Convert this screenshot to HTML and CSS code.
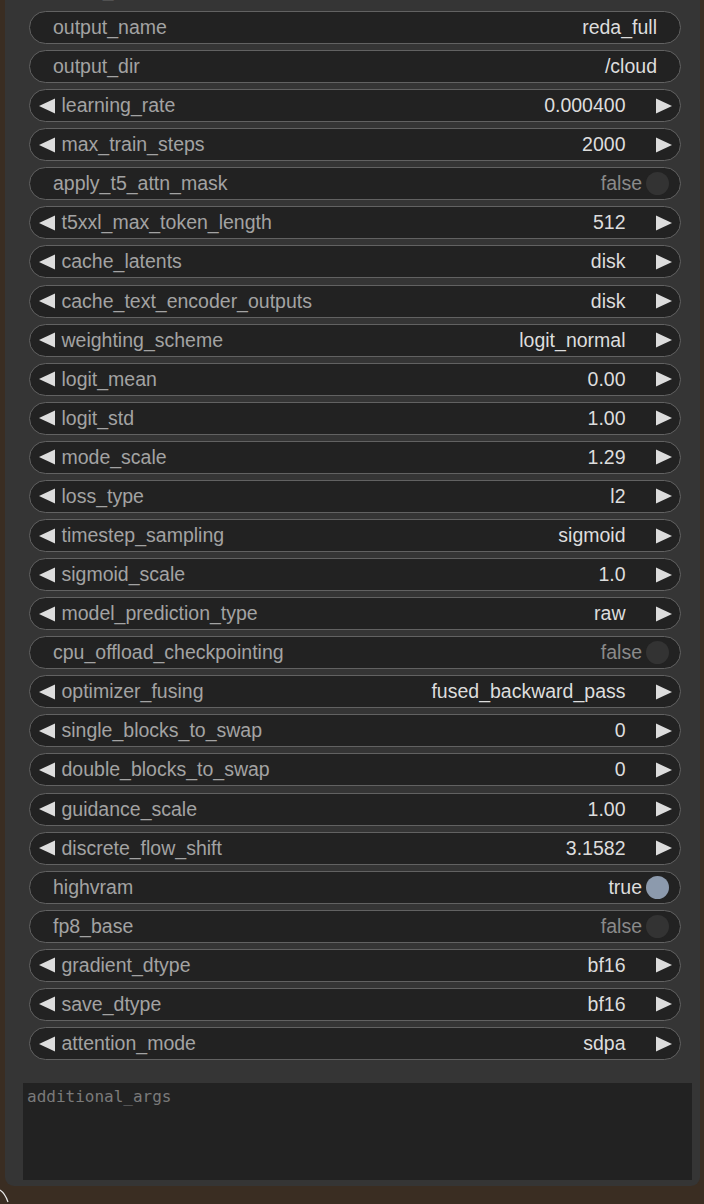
FILE: index.html
```html
<!DOCTYPE html>
<html>
<head>
<meta charset="utf-8">
<link rel="stylesheet" href="styles.css">
</head>
<body>
<div class="canvas">
  <div class="node">
    <div class="top-label">sample_prompts</div>
    <div class="widgets">
      <div class="w plain"><span class="lbl">output_name</span><span class="val">reda_full</span></div>
      <div class="w plain"><span class="lbl">output_dir</span><span class="val">/cloud</span></div>
      <div class="w num"><svg class="arr" viewBox="0 0 16 16"><polygon points="16,0.5 16,15.5 0,8"/></svg><span class="lbl">learning_rate</span><span class="val">0.000400</span><svg class="arr" viewBox="0 0 16 16"><polygon points="0,0.5 0,15.5 16,8"/></svg></div>
      <div class="w num"><svg class="arr" viewBox="0 0 16 16"><polygon points="16,0.5 16,15.5 0,8"/></svg><span class="lbl">max_train_steps</span><span class="val">2000</span><svg class="arr" viewBox="0 0 16 16"><polygon points="0,0.5 0,15.5 16,8"/></svg></div>
      <div class="w tog"><span class="lbl">apply_t5_attn_mask</span><span class="val off">false</span><span class="dot"></span></div>
      <div class="w num"><svg class="arr" viewBox="0 0 16 16"><polygon points="16,0.5 16,15.5 0,8"/></svg><span class="lbl">t5xxl_max_token_length</span><span class="val">512</span><svg class="arr" viewBox="0 0 16 16"><polygon points="0,0.5 0,15.5 16,8"/></svg></div>
      <div class="w num"><svg class="arr" viewBox="0 0 16 16"><polygon points="16,0.5 16,15.5 0,8"/></svg><span class="lbl">cache_latents</span><span class="val">disk</span><svg class="arr" viewBox="0 0 16 16"><polygon points="0,0.5 0,15.5 16,8"/></svg></div>
      <div class="w num"><svg class="arr" viewBox="0 0 16 16"><polygon points="16,0.5 16,15.5 0,8"/></svg><span class="lbl">cache_text_encoder_outputs</span><span class="val">disk</span><svg class="arr" viewBox="0 0 16 16"><polygon points="0,0.5 0,15.5 16,8"/></svg></div>
      <div class="w num"><svg class="arr" viewBox="0 0 16 16"><polygon points="16,0.5 16,15.5 0,8"/></svg><span class="lbl">weighting_scheme</span><span class="val">logit_normal</span><svg class="arr" viewBox="0 0 16 16"><polygon points="0,0.5 0,15.5 16,8"/></svg></div>
      <div class="w num"><svg class="arr" viewBox="0 0 16 16"><polygon points="16,0.5 16,15.5 0,8"/></svg><span class="lbl">logit_mean</span><span class="val">0.00</span><svg class="arr" viewBox="0 0 16 16"><polygon points="0,0.5 0,15.5 16,8"/></svg></div>
      <div class="w num"><svg class="arr" viewBox="0 0 16 16"><polygon points="16,0.5 16,15.5 0,8"/></svg><span class="lbl">logit_std</span><span class="val">1.00</span><svg class="arr" viewBox="0 0 16 16"><polygon points="0,0.5 0,15.5 16,8"/></svg></div>
      <div class="w num"><svg class="arr" viewBox="0 0 16 16"><polygon points="16,0.5 16,15.5 0,8"/></svg><span class="lbl">mode_scale</span><span class="val">1.29</span><svg class="arr" viewBox="0 0 16 16"><polygon points="0,0.5 0,15.5 16,8"/></svg></div>
      <div class="w num"><svg class="arr" viewBox="0 0 16 16"><polygon points="16,0.5 16,15.5 0,8"/></svg><span class="lbl">loss_type</span><span class="val">l2</span><svg class="arr" viewBox="0 0 16 16"><polygon points="0,0.5 0,15.5 16,8"/></svg></div>
      <div class="w num"><svg class="arr" viewBox="0 0 16 16"><polygon points="16,0.5 16,15.5 0,8"/></svg><span class="lbl">timestep_sampling</span><span class="val">sigmoid</span><svg class="arr" viewBox="0 0 16 16"><polygon points="0,0.5 0,15.5 16,8"/></svg></div>
      <div class="w num"><svg class="arr" viewBox="0 0 16 16"><polygon points="16,0.5 16,15.5 0,8"/></svg><span class="lbl">sigmoid_scale</span><span class="val">1.0</span><svg class="arr" viewBox="0 0 16 16"><polygon points="0,0.5 0,15.5 16,8"/></svg></div>
      <div class="w num"><svg class="arr" viewBox="0 0 16 16"><polygon points="16,0.5 16,15.5 0,8"/></svg><span class="lbl">model_prediction_type</span><span class="val">raw</span><svg class="arr" viewBox="0 0 16 16"><polygon points="0,0.5 0,15.5 16,8"/></svg></div>
      <div class="w tog"><span class="lbl">cpu_offload_checkpointing</span><span class="val off">false</span><span class="dot"></span></div>
      <div class="w num"><svg class="arr" viewBox="0 0 16 16"><polygon points="16,0.5 16,15.5 0,8"/></svg><span class="lbl">optimizer_fusing</span><span class="val">fused_backward_pass</span><svg class="arr" viewBox="0 0 16 16"><polygon points="0,0.5 0,15.5 16,8"/></svg></div>
      <div class="w num"><svg class="arr" viewBox="0 0 16 16"><polygon points="16,0.5 16,15.5 0,8"/></svg><span class="lbl">single_blocks_to_swap</span><span class="val">0</span><svg class="arr" viewBox="0 0 16 16"><polygon points="0,0.5 0,15.5 16,8"/></svg></div>
      <div class="w num"><svg class="arr" viewBox="0 0 16 16"><polygon points="16,0.5 16,15.5 0,8"/></svg><span class="lbl">double_blocks_to_swap</span><span class="val">0</span><svg class="arr" viewBox="0 0 16 16"><polygon points="0,0.5 0,15.5 16,8"/></svg></div>
      <div class="w num"><svg class="arr" viewBox="0 0 16 16"><polygon points="16,0.5 16,15.5 0,8"/></svg><span class="lbl">guidance_scale</span><span class="val">1.00</span><svg class="arr" viewBox="0 0 16 16"><polygon points="0,0.5 0,15.5 16,8"/></svg></div>
      <div class="w num"><svg class="arr" viewBox="0 0 16 16"><polygon points="16,0.5 16,15.5 0,8"/></svg><span class="lbl">discrete_flow_shift</span><span class="val">3.1582</span><svg class="arr" viewBox="0 0 16 16"><polygon points="0,0.5 0,15.5 16,8"/></svg></div>
      <div class="w tog"><span class="lbl">highvram</span><span class="val">true</span><span class="dot on"></span></div>
      <div class="w tog"><span class="lbl">fp8_base</span><span class="val off">false</span><span class="dot"></span></div>
      <div class="w num"><svg class="arr" viewBox="0 0 16 16"><polygon points="16,0.5 16,15.5 0,8"/></svg><span class="lbl">gradient_dtype</span><span class="val">bf16</span><svg class="arr" viewBox="0 0 16 16"><polygon points="0,0.5 0,15.5 16,8"/></svg></div>
      <div class="w num"><svg class="arr" viewBox="0 0 16 16"><polygon points="16,0.5 16,15.5 0,8"/></svg><span class="lbl">save_dtype</span><span class="val">bf16</span><svg class="arr" viewBox="0 0 16 16"><polygon points="0,0.5 0,15.5 16,8"/></svg></div>
      <div class="w num"><svg class="arr" viewBox="0 0 16 16"><polygon points="16,0.5 16,15.5 0,8"/></svg><span class="lbl">attention_mode</span><span class="val">sdpa</span><svg class="arr" viewBox="0 0 16 16"><polygon points="0,0.5 0,15.5 16,8"/></svg></div>
    </div>
    <div class="textarea">additional_args</div>
  </div>
  <svg class="wire" viewBox="0 0 20 20" width="20" height="20"><path d="M0 4 C3 6 6 10 8 16" fill="none" stroke="#e8e8e8" stroke-width="1.2"/></svg>
</div>
</body>
</html>
```
FILE: styles.css
```css
html, body {
  margin: 0;
  padding: 0;
  background: #3a2d22;
  overflow: hidden;
}
.canvas {
  position: relative;
  width: 704px;
  height: 1204px;
  overflow: hidden;
}
.node {
  margin-left: 5px;
  width: 695px;
  height: 1197px;
  background: #353535;
  border-radius: 0 0 9px 9px;
  box-sizing: border-box;
  font-family: "Liberation Sans", Arial, sans-serif;
  font-size: 19.5px;
  position: relative;
}
.top-label {
  color: #9a9a9a;
  height: 11px;
  line-height: 0;
  padding-left: 35px;
  margin-top: -11px;
  padding-top: 0;
  box-sizing: content-box;
  overflow: visible;
}
.widgets {
  display: flex;
  flex-direction: column;
  gap: 6.08px;
  padding: 11px 19px 0 24px;
}
.w {
  height: 33px;
  box-sizing: border-box;
  border: 1.5px solid #626262;
  border-radius: 17px;
  background: #222222;
  display: flex;
  align-items: center;
  white-space: nowrap;
}
.lbl {
  color: #a3a3a3;
  flex: 1;
}
.val {
  color: #dddddd;
}
.val.off {
  color: #8a8a8a;
}
.plain {
  padding: 0 23px 0 23px;
}
.num {
  padding: 0 8.5px;
}
.num .lbl {
  margin-left: 7px;
}
.num .val {
  margin-right: 30px;
}
.arr {
  width: 16px;
  height: 16px;
  fill: #dddddd;
  flex: none;
}
.tog {
  padding: 0 11px 0 23px;
}
.dot {
  width: 23px;
  height: 23px;
  border-radius: 50%;
  background: #333333;
  margin-left: 4px;
  flex: none;
}
.dot.on {
  background: #8c9aad;
}
.textarea {
  margin: 23px 8px 0 18px;
  height: 97px;
  background: #222222;
  color: #7a7a7a;
  font-family: "DejaVu Sans Mono", monospace;
  font-size: 16px;
  padding: 4px 4px;
  box-sizing: border-box;
}
.wire {
  position: absolute;
  left: 0;
  top: 1186px;
}
```
